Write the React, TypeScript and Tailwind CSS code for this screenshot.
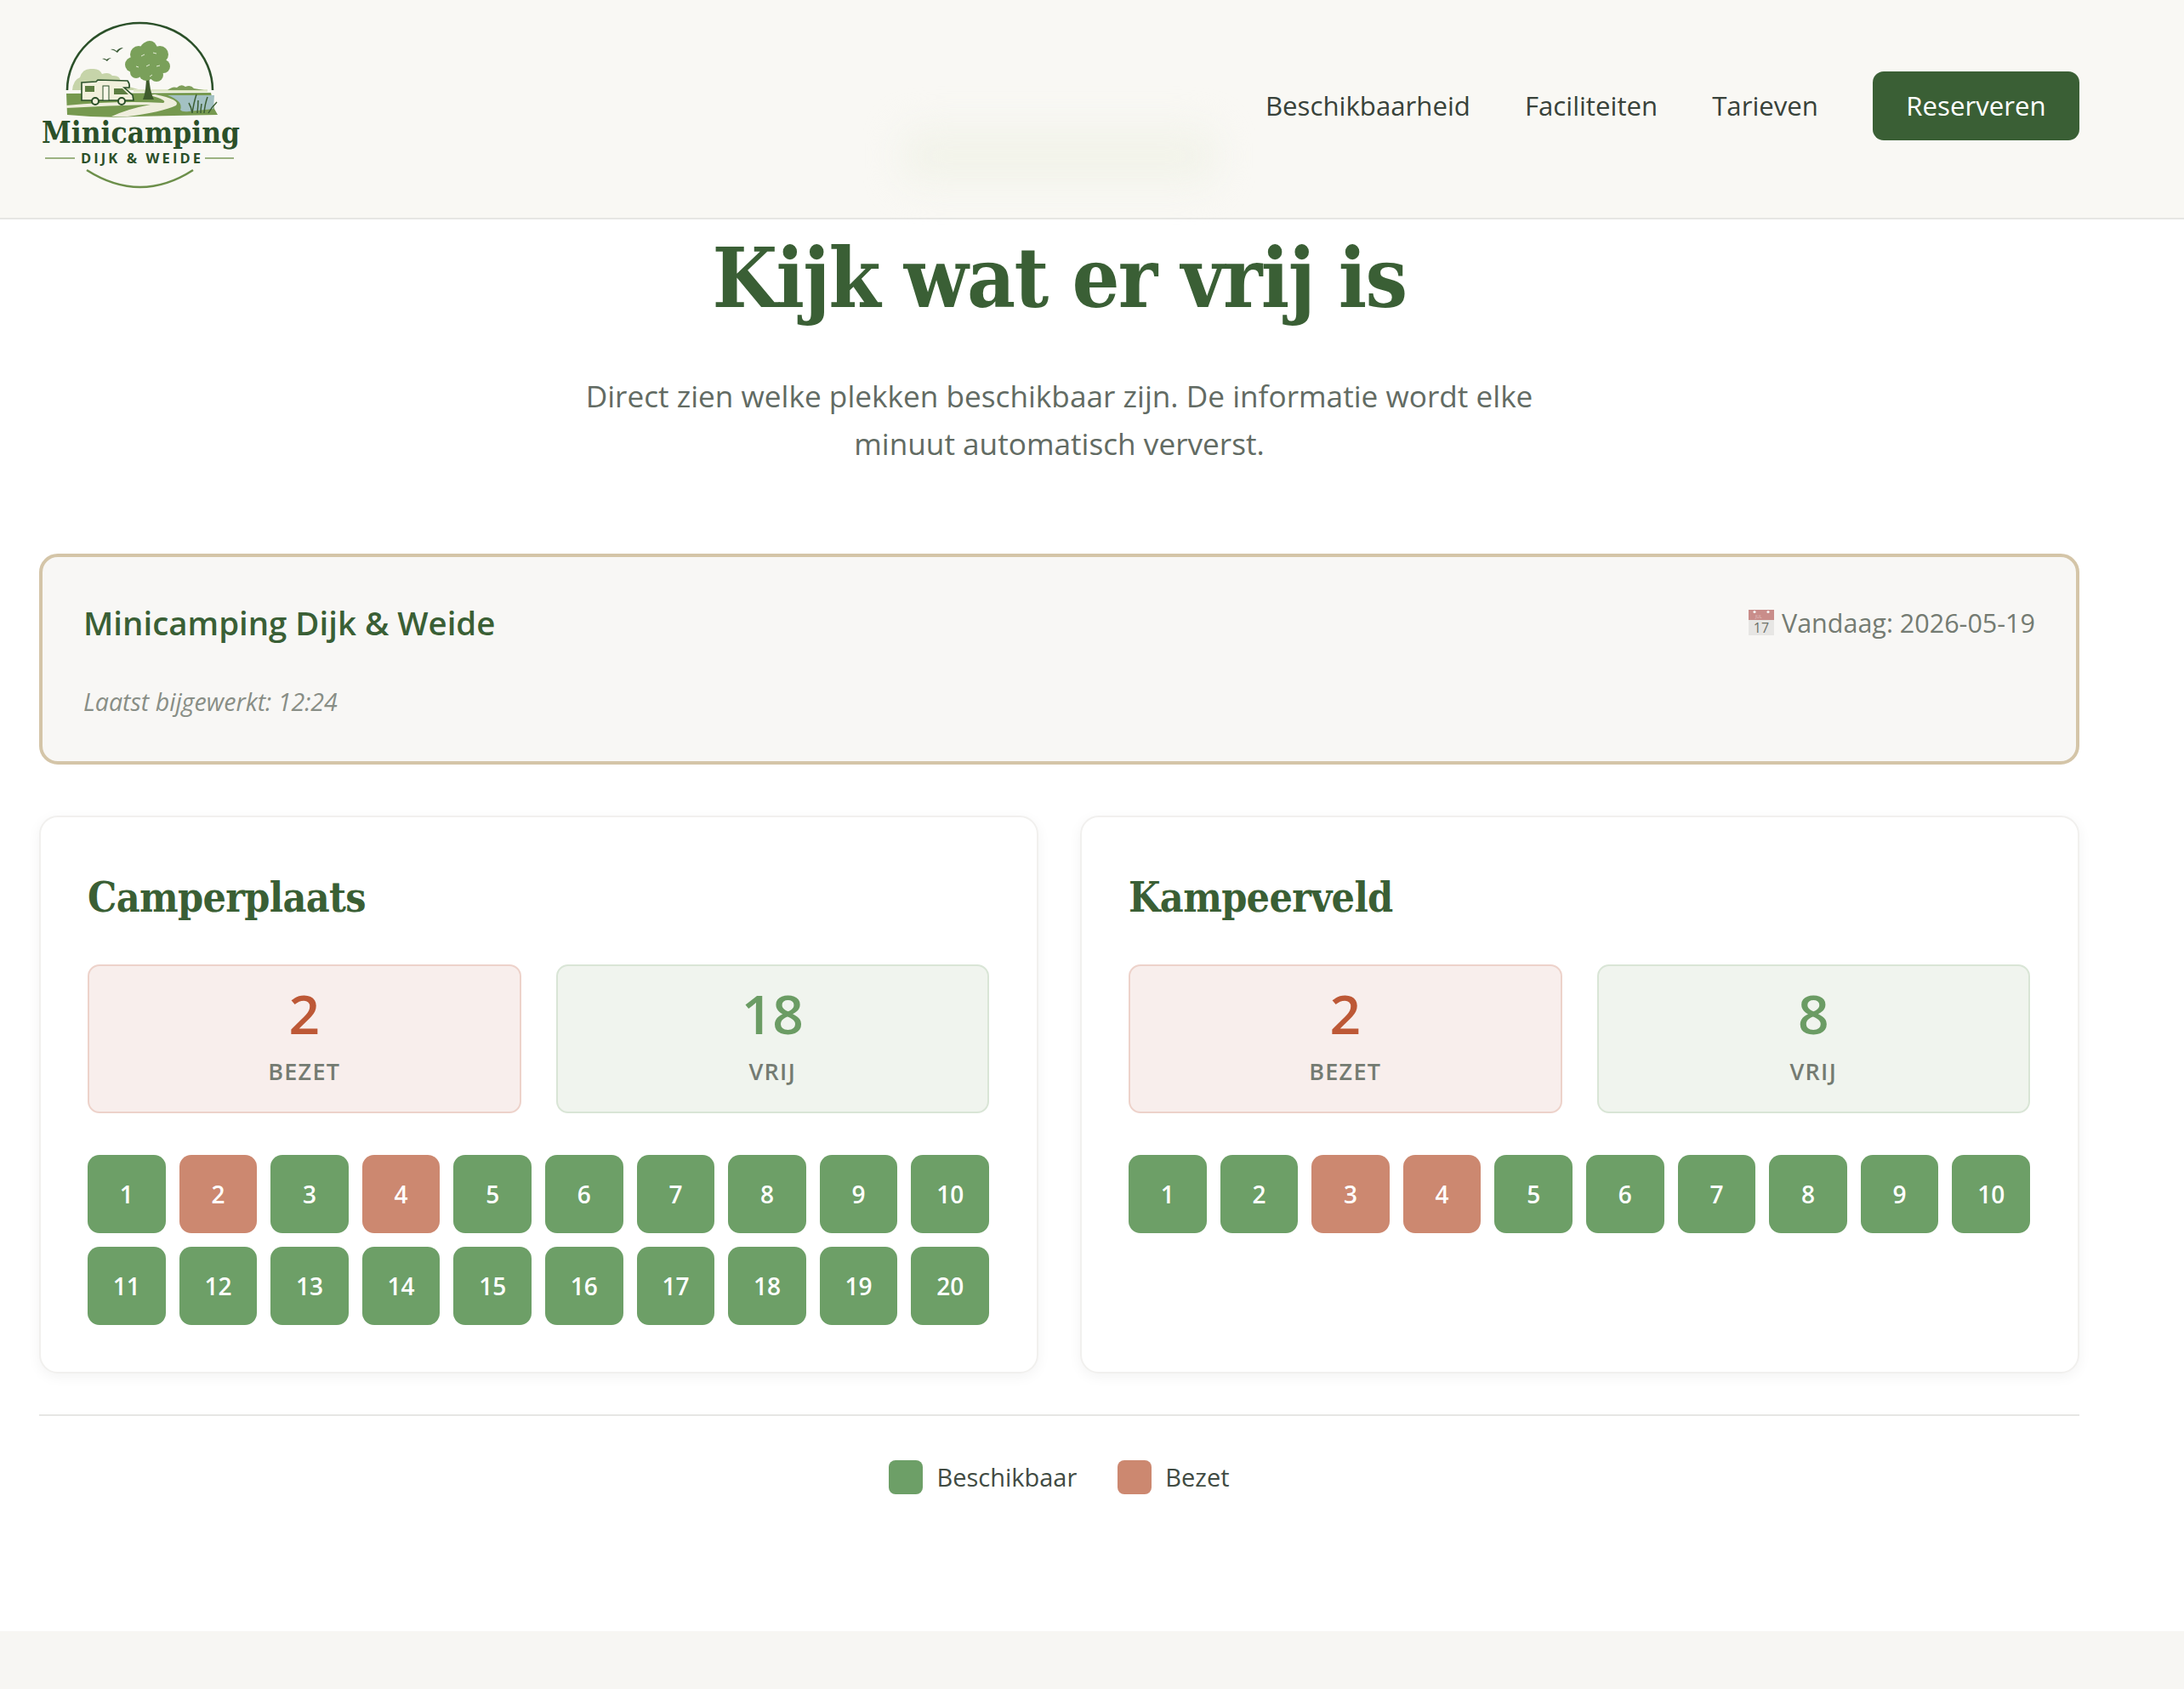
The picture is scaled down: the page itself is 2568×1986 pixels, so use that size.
const camperSpots = Array.from({ length: 20 }, (_, i) => i + 1);
const tentSpots = Array.from({ length: 10 }, (_, i) => i + 1);

const treeBlobs = [
  [175, 60, 11], [163, 64, 10], [188, 64, 10], [156, 76, 9], [168, 74, 12], [183, 76, 12],
  [192, 78, 8], [160, 85, 7], [172, 86, 9], [184, 88, 8], [176, 56, 8],
];

const Logo = () => (
  <svg viewBox="46 24 240 200" className="block w-[240px] h-[200px]">
    {/* ring */}
    <path d="M79 106 A85.5 79 0 0 1 250 106" fill="none" stroke="#2b5029" strokeWidth="2.6" />
    <path d="M102 200 Q165 240 227 200" fill="none" stroke="#6c8f4a" strokeWidth="2.6" />
    {/* birds */}
    <path d="M130 58 q4 -1 7 2 q3 -4 8 -4 q-4 2 -7 6 q-3 -3 -8 -4z" fill="#3a5a35" />
    <path d="M120 69 q3 -1 5 1 q3 -2 6 -2 q-3 1 -5 4 q-2 -2 -6 -3z" fill="#3a5a35" />
    {/* bushes */}
    <path d="M85 106 q1 -12 9 -15 q3 -11 14 -10 q9 -1 12 6 q8 -3 12 2 q9 -1 10 7 q7 1 10 6 l14 4z" fill="#c6d4a9" />
    <path d="M157 105 H244 V108 H157z" fill="#dfe6c6" />
    <path d="M197 106 q6 -5 11 -3 q5 -5 10 -1 q6 -3 10 2 l12 2z" fill="#7f9f5a" />
    {/* grass */}
    <path d="M78 110 L248 109 L252 128 L256 135 Q200 136 160 137 Q120 139 79 135z" fill="#76994f" />
    <path d="M197 112 L252 112 L251 128 L222 131 Q214 132 212 129 Q216 119 197 112z" fill="#a3c1c3" />
    {/* road */}
    <path d="M78 127 Q130 124 177 123 Q150 128 131 137 L150 137 Q190 132 207 124 Q213 117 182 111 L176 112 Q198 118 192 121 Q140 118 78 124z" fill="#efeedd" />
    {/* reeds */}
    <path d="M226 133 Q228 120 231 111 M232 133 Q233 124 233 118 M240 133 Q241 122 244 114 M245 133 Q249 126 255 120 M226 133 Q225 126 222 121 M236 133 Q236 128 237 122" stroke="#3c5e33" strokeWidth="1.5" fill="none" />
    {/* tree */}
    <path d="M168 117 Q172 108 172 88 L175 88 Q176 108 181 117z" fill="#3f5c2c" />
    {treeBlobs.map(([cx, cy, r], i) => (
      <circle key={i} cx={cx} cy={cy} r={r} fill="#7aa05a" />
    ))}
    <path d="M166 66 l4 -2 M180 62 l4 1 M172 78 l4 -2 M184 78 l4 -1 M160 78 l3 1 M176 90 l3 -2" stroke="#e4ecd6" strokeWidth="1" />
    {/* camper */}
    <path d="M96 97 L113 96 L115 94 L150 95 Q153 99 152 103 L146 103 L156 112 L157 118 L96 118z" fill="#f2f0dc" stroke="#2b5029" strokeWidth="1.6" />
    <rect x="100" y="101" width="11" height="7" fill="#5d7d41" />
    <rect x="121" y="101" width="7" height="17" fill="#f8f7e9" stroke="#2b5029" strokeWidth="1" />
    <path d="M134 104 L144 104 L151 111 L134 111z" fill="#5d7d41" />
    <circle cx="112" cy="119" r="4" fill="#f2f0dc" stroke="#2b5029" strokeWidth="2" />
    <circle cx="143" cy="119" r="4" fill="#f2f0dc" stroke="#2b5029" strokeWidth="2" />
    {/* wordmark */}
    <text x="49" y="168" textLength="233" lengthAdjust="spacingAndGlyphs" fill="#2b5029" fontSize="36" fontWeight="700" fontFamily="'DejaVu Serif Condensed', 'DejaVu Serif', serif">Minicamping</text>
    <path d="M53 186 H88 M241 186 H275" stroke="#7d9a5c" strokeWidth="1.4" />
    <text x="95" y="192" textLength="141" lengthAdjust="spacing" fill="#2b5029" fontSize="16.5" fontWeight="700" fontFamily="'Open Sans', sans-serif">DIJK &amp; WEIDE</text>
  </svg>
);

const CalendarIcon = () => (
  <svg viewBox="0 0 30 30" className="h-[30px] w-[30px] shrink-0">
    <rect x="0" y="0" width="30" height="30" fill="#e7e6e4" />
    <rect x="0" y="0" width="30" height="12" fill="#c98d8a" />
    <circle cx="7" cy="2.5" r="1.6" fill="#f7f6f4" />
    <circle cx="23" cy="2.5" r="1.6" fill="#f7f6f4" />
    <text x="8" y="10" fontSize="5" fill="#e3c5c3" fontFamily="'Open Sans', sans-serif">JUL</text>
    <text x="15" y="27" textAnchor="middle" fontSize="16" fill="#6d7168" fontFamily="'Open Sans', sans-serif">17</text>
  </svg>
);

const Stat = ({ value, label, free }: { value: number; label: string; free?: boolean }) => (
  <div
    className={`h-[175px] rounded-[14px] border-2 pt-[20px] text-center ${
      free ? "bg-[#f0f4ee] border-[#d9e5d6]" : "bg-[#f8eeec] border-[#edd2ca]"
    }`}
  >
    <div className={`text-[64px] leading-[72px] font-semibold ${free ? "text-[#6b9c64]" : "text-[#bd5836]"}`}>
      {value}
    </div>
    <div className="mt-[14px] text-[27px] leading-[36px] font-semibold tracking-[1.3px] text-[#747b72]">{label}</div>
  </div>
);

const Tile = ({ n, taken }: { n: number; taken: boolean }) => (
  <div
    className={`flex h-[92px] items-center justify-center rounded-[14px] text-[28px] font-semibold text-white ${
      taken ? "bg-[#cc8870]" : "bg-[#6d9f67]"
    }`}
  >
    {n}
  </div>
);

const FieldCard = ({
  title,
  taken,
  free,
  spots,
  takenSpots,
}: {
  title: string;
  taken: number;
  free: number;
  spots: number[];
  takenSpots: number[];
}) => (
  <div className="h-[656px] rounded-[22px] border-2 border-[#f1f0ee] bg-white pl-[55px] pr-[56px] pt-[62px] shadow-[0_4px_16px_rgba(0,0,0,0.05)]">
    <h3 className="font-['DejaVu_Serif_Condensed','DejaVu_Serif',serif] text-[48px] leading-[64px] font-bold tracking-[-0.7px] text-[#3a5f35]">
      {title}
    </h3>
    <div className="mt-[47px] grid grid-cols-2 gap-[41px]">
      <Stat value={taken} label="BEZET" />
      <Stat value={free} label="VRIJ" free />
    </div>
    <div className="mt-[49px] grid grid-cols-10 gap-[16px]">
      {spots.map((n) => (
        <Tile key={n} n={n} taken={takenSpots.includes(n)} />
      ))}
    </div>
  </div>
);

export default function App() {
  return (
    <div className="relative min-h-[1986px] bg-white font-['Open_Sans',sans-serif] overflow-hidden">
      {/* Header */}
      <header className="flex h-[258px] items-center border-b-2 border-[#e6e6e3] bg-[#f9f8f4] pl-[46px] pr-[123px] pb-[8px]">
        <Logo />
        <nav className="ml-auto flex items-center gap-[64px] text-[31.2px] font-medium text-[#38423a]">
          <span>Beschikbaarheid</span>
          <span>Faciliteiten</span>
          <span>Tarieven</span>
          <span className="flex h-[81px] w-[243px] items-center justify-center rounded-[13px] bg-[#3a5f35] text-white">
            Reserveren
          </span>
        </nav>
      </header>

      {/* faint blurred toast behind the header */}
      <div className="absolute left-[1060px] top-[150px] h-[66px] w-[370px] rounded-[24px] bg-[#f2f3ea] blur-[20px]" />

      <main className="ml-[46px] w-[2399px]">
        <div className="text-center">
          <h1 className="mt-[9px] font-['DejaVu_Serif_Condensed','DejaVu_Serif',serif] text-[98px] leading-[120px] font-bold tracking-[-1.7px] text-[#3a5f35]">
            Kijk wat er vrij is
          </h1>
          <p className="mx-auto mt-[50px] w-[1300px] text-[35.2px] leading-[56px] text-[#626b63]">
            Direct zien welke plekken beschikbaar zijn. De informatie wordt elke
            <br />
            minuut automatisch ververst.
          </p>
        </div>

        {/* Status bar */}
        <div className="mt-[102px] h-[248px] rounded-[22px] border-4 border-[#d4c5a8] bg-[#f8f7f5] px-[48px] pt-[49px]">
          <div className="flex items-start justify-between">
            <h2 className="text-[38.4px] leading-[56px] font-semibold text-[#3a5f35]">Minicamping Dijk &amp; Weide</h2>
            <div className="mt-[3px] flex items-center gap-[9px] text-[30.5px] leading-[50px] text-[#747b72]">
              <CalendarIcon />
              <span>Vandaag: 2026-05-19</span>
            </div>
          </div>
          <p className="mt-[45px] text-[28.6px] leading-[40px] italic text-[#888e86]">Laatst bijgewerkt: 12:24</p>
        </div>

        {/* Fields */}
        <div className="mt-[60px] grid grid-cols-2 gap-[49px]">
          <FieldCard title="Camperplaats" taken={2} free={18} spots={camperSpots} takenSpots={[2, 4]} />
          <FieldCard title="Kampeerveld" taken={2} free={8} spots={tentSpots} takenSpots={[3, 4]} />
        </div>

        <div className="mt-[48px] border-t-2 border-[#e6e6e4] pt-[50px]">
          <div className="flex items-center justify-center gap-[48px] text-[29px] text-[#414b43]">
            <div className="flex items-center gap-[16px]">
              <span className="h-[40px] w-[40px] rounded-[8px] bg-[#6d9f67]" />
              Beschikbaar
            </div>
            <div className="flex items-center gap-[16px]">
              <span className="h-[40px] w-[40px] rounded-[8px] bg-[#cc8870]" />
              Bezet
            </div>
          </div>
        </div>
      </main>

      <footer className="absolute inset-x-0 top-[1918px] h-[68px] bg-[#f7f6f3]" />
    </div>
  );
}
